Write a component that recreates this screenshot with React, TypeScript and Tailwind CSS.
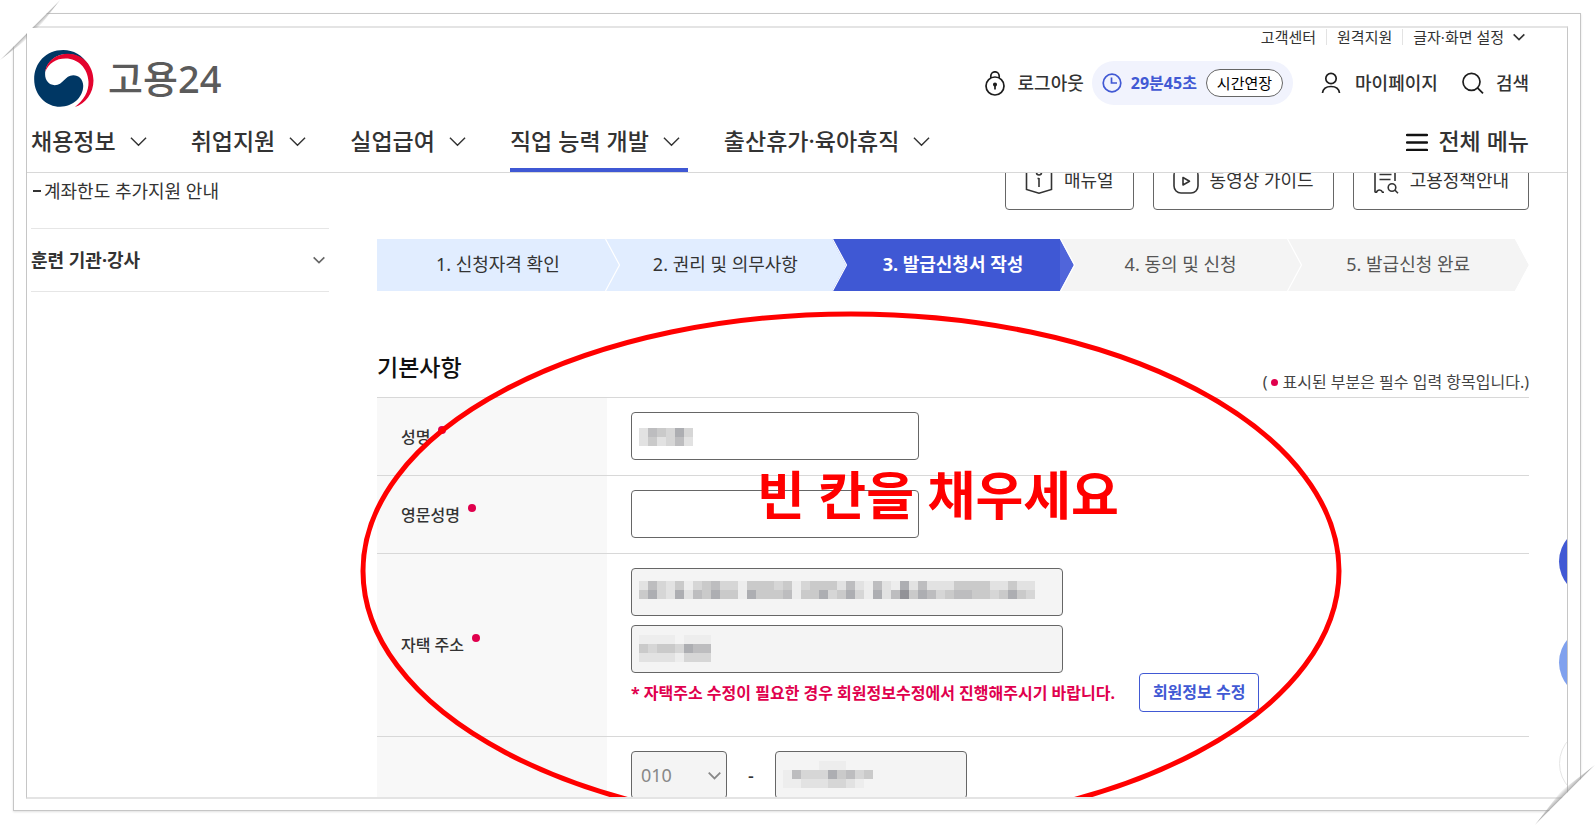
/**
 * File: App.tsx
 *
 * Purpose:
 * Step 3 of the training card application: basic information form with the
 * site header, side menu, progress steps and a guide drawn over the form.
 */
import type { ReactNode } from "react";

const menus = [
  { label: "채용정보", active: false },
  { label: "취업지원", active: false },
  { label: "실업급여", active: false },
  { label: "직업 능력 개발", active: true },
  { label: "출산휴가·육아휴직", active: false },
];

const steps = [
  { label: "1. 신청자격 확인", state: "done" },
  { label: "2. 권리 및 의무사항", state: "done" },
  { label: "3. 발급신청서 작성", state: "current" },
  { label: "4. 동의 및 신청", state: "todo" },
  { label: "5. 발급신청 완료", state: "todo" },
];

const stepStyles: Record<string, { box: string; arrow: string }> = {
  done: { box: "bg-[#e1edff] text-[#333]", arrow: "fill-[#e1edff]" },
  current: { box: "bg-[#3f58d4] font-bold text-white", arrow: "fill-[#5065da]" },
  todo: { box: "bg-[#f4f4f4] text-[#555]", arrow: "fill-[#f4f4f4]" },
};

// Grey cells that hide personal data, one string per row, "." is empty
const shades: Record<string, string> = {
  a: "#ededed",
  b: "#e2e2e2",
  c: "#d6d6d6",
  d: "#cacaca",
  e: "#bdbdbf",
  f: "#adaeb2",
  g: "#929297",
};

function Mosaic({ rows, className }: { rows: string[]; className: string }) {
  return (
    <svg
      width={rows[0].length * 9}
      height={rows.length * 9}
      className={`pointer-events-none absolute left-2 ${className}`}
      shapeRendering="crispEdges"
      aria-hidden="true"
    >
      {rows.map((row, y) =>
        row.split("").map((cell, x) =>
          cell === "." ? null : (
            <rect key={`${x}-${y}`} x={x * 9} y={y * 9} width="9" height="9" fill={shades[cell]} />
          )
        )
      )}
    </svg>
  );
}

function Chevron({ size, strokeWidth = 1.5 }: { size: number; strokeWidth?: number }) {
  return (
    <svg width={size} height={size} viewBox="0 0 18 18" fill="none" stroke="currentColor" strokeWidth={strokeWidth} aria-hidden="true">
      <path d="M1 5l8 8 8-8" />
    </svg>
  );
}

function Logo() {
  return (
    <svg width="60" height="57" viewBox="0 0 180 172" aria-hidden="true">
      <path
        fill="#003764"
        d="M165 47C145 14 118 0 88 0C35 0 0 40 0 88C0 138 38 171 78 171C118 171 148 142 148 108C148 88 134 76 118 76C92 76 88 106 62 106C44 106 33 90 33 74C33 38 65 12 100 12C125 12 148 25 165 47Z"
      />
      <path
        fill="#e4032e"
        d="M33 66C38 30 70 11 102 11C148 11 179 48 179 92C179 130 155 162 123 172C150 152 165 125 164 96C162 55 132 26 95 26C65 26 45 40 33 66Z"
      />
    </svg>
  );
}

function LockIcon() {
  return (
    <svg width="20" height="25" viewBox="0 0 20 25" fill="none" stroke="#1d1d1d" strokeWidth="1.7" aria-hidden="true">
      <circle cx="10" cy="15" r="9" />
      <path d="M5.8 7V5a4.2 4.2 0 0 1 8.4 0v2M10 14v4.500" />
      <circle cx="10" cy="13.6" r="1.2" fill="#1d1d1d" />
    </svg>
  );
}

function ClockIcon() {
  return (
    <svg width="20" height="20" viewBox="0 0 20 20" fill="none" stroke="#4159d4" strokeWidth="1.7" aria-hidden="true">
      <circle cx="10" cy="10" r="8.8" />
      <path d="M9.500 4.500V10h5.500" />
    </svg>
  );
}

function UserIcon() {
  return (
    <svg width="20" height="22" viewBox="0 0 20 22" fill="none" stroke="#1d1d1d" strokeWidth="1.7" aria-hidden="true">
      <circle cx="10" cy="6.5" r="5.2" />
      <path d="M1.500 21c.600-4.600 4.200-6.500 8.500-6.500s7.900 1.900 8.500 6.500" />
    </svg>
  );
}

function SearchIcon() {
  return (
    <svg width="22" height="22" viewBox="0 0 22 22" fill="none" stroke="#1d1d1d" strokeWidth="1.7" aria-hidden="true">
      <circle cx="9.500" cy="9.800" r="8.500" />
      <path d="M15.500 15.800l5.500 5.500" />
    </svg>
  );
}

function ManualIcon() {
  return (
    <svg width="28" height="28" viewBox="0 0 28 28" fill="none" stroke="#333" strokeWidth="1.600" aria-hidden="true">
      <path d="M1.500 3v20.500l12.500 3.700 12.500-3.700V3" />
      <path d="M14 12v9M12.500 12.500H14" />
      <circle cx="14" cy="6.500" r="2.500" />
    </svg>
  );
}

function VideoIcon() {
  return (
    <svg width="26" height="28" viewBox="0 0 26 28" fill="none" stroke="#333" strokeWidth="1.600" aria-hidden="true">
      <rect x="1" y="2" width="24" height="25" rx="7" />
      <path d="M10 11.500v7.500l6.500-3.700z" strokeLinejoin="round" />
    </svg>
  );
}

function PolicyIcon() {
  return (
    <svg width="26" height="28" viewBox="0 0 26 28" fill="none" stroke="#333" strokeWidth="1.600" aria-hidden="true">
      <path d="M2 1v25.500M2 26.200h1.500c1-3 5-3 6 0h1.500M22 1v14M6.500 8.500h12M6.500 13.500h11" />
      <circle cx="19" cy="21.500" r="3.800" />
      <path d="M21.800 24l3.200 3.200" />
    </svg>
  );
}

function GuideButton({ icon, label }: { icon: ReactNode; label: string }) {
  return (
    <button type="button" className="flex h-[58px] items-center gap-[11px] rounded border border-[#666] bg-white px-[19px] pb-[2px] text-[18px]">
      {icon}
      {label}
    </button>
  );
}

function RequiredDot() {
  return <span className="ml-2 inline-block size-2 -translate-y-[9px] rounded-full bg-[#e0004d]" />;
}

function FormRow({ label, htmlFor, children }: { label: string; htmlFor: string; children: ReactNode }) {
  return (
    <tr>
      <th scope="row" className="w-[230px] border-t border-[#d8d8d8] bg-[#f8f8f8] pl-6 text-left text-[16px] font-medium">
        {label && (
          <label htmlFor={htmlFor}>
            {label}
            <RequiredDot />
          </label>
        )}
      </th>
      <td className="border-t border-[#d8d8d8] px-6 pb-[15px] pt-[14px]">{children}</td>
    </tr>
  );
}

function Header() {
  return (
    <header className="relative z-10 border-b border-[#d8d8d8] bg-white pl-1 pr-[38px]">
      <div className="flex h-[18px] items-center justify-end text-[15px] leading-[18px]">
        <a href="#help">고객센터</a>
        <span className="mx-[10px] h-4 w-px bg-[#e3e3e3]" />
        <a href="#remote">원격지원</a>
        <span className="mx-[10px] h-4 w-px bg-[#e3e3e3]" />
        <button type="button" className="flex items-center gap-[9px] pr-1">
          글자·화면 설정
          <Chevron size={12} strokeWidth={2.4} />
        </button>
      </div>

      <div className="flex items-end justify-between pt-1">
        <a href="#home" className="flex h-[57px] items-center gap-[14px] pl-[3px] text-[38px] font-medium leading-[57px] text-[#5b5b5b]">
          <Logo />
          고용24
        </a>
        <div className="flex h-[46px] items-center pb-[2px] text-[18px] font-medium">
          <button type="button" className="flex items-center gap-[13px]">
            <LockIcon />
            로그아웃
          </button>
          <div className="ml-2 flex h-11 items-center rounded-full bg-[#f1f3fd] px-[10px]">
            <ClockIcon />
            <span className="ml-[9px] text-[16px] font-bold text-[#4159d4]">29분45초</span>
            <button type="button" className="ml-[9px] h-7 rounded-full border border-[#666] bg-white px-[10px] text-[15px] font-normal leading-[24px] text-black">
              시간연장
            </button>
          </div>
          <a href="#mypage" className="ml-7 flex items-center gap-[14px]">
            <UserIcon />
            마이페이지
          </a>
          <button type="button" className="ml-6 flex items-center gap-3">
            <SearchIcon />
            검색
          </button>
        </div>
      </div>

      <nav className="flex h-[65px] justify-between text-[23px] font-medium">
        <ul className="flex gap-9">
          {menus.map((menu) => (
            <li key={menu.label} className="flex">
              <button
                type="button"
                className={
                  menu.active
                    ? "flex items-center gap-[14px] border-b-4 border-[#3f58d4] pr-2 pt-2"
                    : "flex items-center gap-[14px] border-b-4 border-transparent pr-2 pt-2"
                }
              >
                {menu.label}
                <Chevron size={17} />
              </button>
            </li>
          ))}
        </ul>
        <button type="button" className="flex items-center gap-[10px] border-b-4 border-transparent pt-2">
          <svg width="22" height="18" viewBox="0 0 22 18" stroke="#111" strokeWidth="2.500" strokeLinecap="round" aria-hidden="true">
            <path d="M1 2h20M1 9.500h20M1 17h20" />
          </svg>
          전체 메뉴
        </button>
      </nav>
    </header>
  );
}

function Steps() {
  return (
    <ol className="mt-[29px] flex h-[52px] pr-[14px] text-[18px]">
      {steps.map((step) => (
        <li
          key={step.label}
          className={`relative flex flex-1 items-center justify-center pb-[2px] pl-[14px] ${stepStyles[step.state].box}`}
        >
          {step.label}
          <svg width="16" height="52" viewBox="0 0 16 52" className="absolute left-full top-0 z-[1]" aria-hidden="true">
            <path d="M0 0l14 26L0 52z" className={stepStyles[step.state].arrow} />
            <path d="M.500 0l14 26-14 26" fill="none" stroke="#fff" strokeWidth="1.200" />
          </svg>
        </li>
      ))}
    </ol>
  );
}

export default function App() {
  return (
    <div className="relative h-screen overflow-hidden bg-white pb-[14px] pl-[13px] pr-[14px] pt-[13px] font-['Noto_Sans','Noto_Sans_CJK_KR',sans-serif] text-[#333]">
      <div className="h-full border border-[#c6c6c6] px-3 pb-[11px] pt-3 shadow-[0_1px_2px_rgba(0,0,0,0.12)]">
        <div className="relative h-full overflow-hidden border-x border-y-2 border-x-[#c6c6c6] border-y-[#e4e4e4]">
          <Header />

          <div className="flex gap-12 pl-1 pr-[38px]">
            <aside className="w-[298px] shrink-0">
              <a href="#limit" className="flex h-9 items-center pl-[2px] text-[18px]">
                <span className="mr-[3px] h-[2px] w-2 bg-[#333]" />
                계좌한도 추가지원 안내
              </a>
              <button type="button" className="mt-[19px] flex h-16 w-full items-center justify-between border-y border-[#e6e6e6] pr-1 text-[18px] font-bold">
                훈련 기관·강사
                <span className="text-[#666]">
                  <Chevron size={12} strokeWidth={2.4} />
                </span>
              </button>
            </aside>

            <main className="min-w-0 flex-1">
              <div className="-mt-[21px] flex justify-end gap-[19px]">
                <GuideButton icon={<ManualIcon />} label="매뉴얼" />
                <GuideButton icon={<VideoIcon />} label="동영상 가이드" />
                <GuideButton icon={<PolicyIcon />} label="고용정책안내" />
              </div>

              <Steps />

              <div className="mt-[60px] flex h-[46px] justify-between">
                <h2 className="text-[23px] font-medium leading-8 text-[#111]">기본사항</h2>
                <p className="flex items-center self-end pb-[3px] text-[16px] leading-6 text-[#444]">
                  (<span className="mx-1 size-[7px] rounded-full bg-[#e0004d]" />
                  표시된 부분은 필수 입력 항목입니다.)
                </p>
              </div>

              <table className="w-full border-separate border-spacing-0">
                <tbody>
                  <FormRow label="성명" htmlFor="name">
                    <div className="relative w-72">
                      <input id="name" type="text" className="block h-12 w-full rounded border border-[#666] bg-white px-3" />
                      <Mosaic className="top-4" rows={["bedcfc", "bdbceb"]} />
                    </div>
                  </FormRow>
                  <FormRow label="영문성명" htmlFor="english-name">
                    <input id="english-name" type="text" className="block h-12 w-72 rounded border border-[#666] bg-white px-3" />
                  </FormRow>
                  <FormRow label="자택 주소" htmlFor="address">
                    <div className="flex flex-col gap-[9px] pb-[9px]">
                      <div className="relative w-[432px]">
                        <input id="address" type="text" readOnly className="block h-12 w-full rounded border border-[#666] bg-[#f4f4f4] px-3" />
                        <Mosaic
                          className="top-[13px]"
                          rows={[
                            "becbdacdeccadddcdacdddbebaebafbebbbddddbbdbb",
                            "dfcbfbedfddafdddeaddfcdfcafbegdfecdeeddcdfdc",
                          ]}
                        />
                      </div>
                      <div className="relative w-[432px]">
                        <input type="text" readOnly aria-label="상세 주소" className="block h-12 w-full rounded border border-[#666] bg-[#f4f4f4] px-3" />
                        <Mosaic className="top-[10px]" rows={["aaaa.aaa", "dcddcfee", "bbbbaccc"]} />
                      </div>
                      <div className="-mt-[9px] flex items-center gap-6">
                        <p className="text-[16px] font-bold text-[#e0004d]">
                          * 자택주소 수정이 필요한 경우 회원정보수정에서 진행해주시기 바랍니다.
                        </p>
                        <button type="button" className="h-[39px] rounded border border-[#4159d4] bg-white px-[13px] pb-[2px] text-[16px] font-bold text-[#4159d4]">
                          회원정보 수정
                        </button>
                      </div>
                    </div>
                  </FormRow>
                  <FormRow label="" htmlFor="phone">
                    <div className="flex items-center">
                      <div className="relative w-24 text-[#888]">
                        <select disabled aria-label="휴대전화 앞자리" className="block h-12 w-full appearance-none rounded border border-[#666] bg-[#f4f4f4] pl-[9px] text-[18px] opacity-100">
                          <option>010</option>
                        </select>
                        <span className="pointer-events-none absolute right-[6px] top-[18px]">
                          <Chevron size={13} strokeWidth={2.5} />
                        </span>
                      </div>
                      <span className="w-12 text-center text-[18px] font-medium">-</span>
                      <div className="relative w-48">
                        <input id="phone" type="text" readOnly aria-label="휴대전화 번호" className="block h-12 w-full rounded border border-[#666] bg-[#f4f4f4] px-3" />
                        <Mosaic className="top-[10px]" rows={["....aaa...", "aecccfdecd", "aabbbccba."]} />
                      </div>
                    </div>
                  </FormRow>
                </tbody>
              </table>
            </main>
          </div>

          {/* Floating quick buttons, half outside the right edge */}
          <div className="absolute -right-[63px] top-[498px] flex flex-col gap-[30px]">
            <button type="button" aria-label="상담" className="size-[71px] rounded-full bg-[#4159d4]" />
            <button type="button" aria-label="도움말" className="size-[71px] rounded-full bg-[#80a1ee]" />
            <button type="button" aria-label="맨 위로" className="size-[71px] rounded-full border border-[#e6e6e6] bg-white" />
          </div>

          {/* Guide over the form */}
          <svg width="984" height="524" className="pointer-events-none absolute left-[332px] top-[282px]" fill="none" aria-hidden="true">
            <ellipse cx="492" cy="261" rx="488" ry="257" stroke="#f00" strokeWidth="5" />
          </svg>
          <p className="pointer-events-none absolute left-[730px] top-[432px] whitespace-nowrap text-[52px] font-bold leading-[70px] text-[#f00]">
            빈 칸을 채우세요
          </p>
        </div>
      </div>

      {/* Corner slits that hold the framed page */}
      <svg width="62" height="62" className="absolute left-0 top-0" aria-hidden="true">
        <defs>
          <linearGradient id="slit-top" gradientUnits="userSpaceOnUse" x1="29" y1="29" x2="33" y2="33">
            <stop offset="0" stopColor="#999" />
            <stop offset="1" stopColor="#999" stopOpacity="0" />
          </linearGradient>
        </defs>
        <path d="M0 60L60 0L34 34Z" fill="url(#slit-top)" />
        <path d="M0 0H60L0 60Z" fill="#fff" />
      </svg>
      <svg width="62" height="62" className="absolute bottom-0 right-0" aria-hidden="true">
        <defs>
          <linearGradient id="slit-bottom" gradientUnits="userSpaceOnUse" x1="33" y1="33" x2="28" y2="28">
            <stop offset="0" stopColor="#999" />
            <stop offset="1" stopColor="#999" stopOpacity="0" />
          </linearGradient>
        </defs>
        <path d="M2 62L62 2L28 28Z" fill="url(#slit-bottom)" />
        <path d="M62 62H2L62 2Z" fill="#fff" />
      </svg>
    </div>
  );
}
